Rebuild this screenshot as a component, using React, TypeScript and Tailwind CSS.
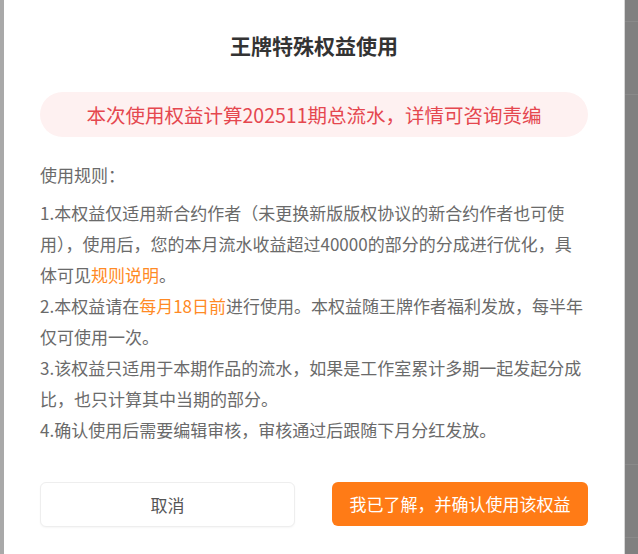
const rules = [
  <>
    1.本权益仅适用新合约作者（未更换新版版权协议的新合约作者也可使用），使用后，您的本月流水收益超过40000的部分的分成进行优化，具体可见
    <span className="text-[#ff8a25]">规则说明</span>。
  </>,
  <>
    2.本权益请在<span className="text-[#ff8a25]">每月18日前</span>
    进行使用。本权益随王牌作者福利发放，每半年仅可使用一次。
  </>,
  <>3.该权益只适用于本期作品的流水，如果是工作室累计多期一起发起分成比，也只计算其中当期的部分。</>,
  <>4.确认使用后需要编辑审核，审核通过后跟随下月分红发放。</>,
];

export default function App() {
  return (
    <div className="flex w-[638px] h-[554px] overflow-hidden font-['Noto_Sans_CJK_SC',sans-serif]">
      {/* overlay edge, left */}
      <div className="w-[4px] bg-[#a9a9a9]" />

      {/* Modal */}
      <div className="w-[621px] bg-white border-r border-[#d6d6d6] px-[36px] pt-[31px]">
        <h2 className="text-center text-[21px] leading-[28px] font-bold text-[#333]">
          王牌特殊权益使用
        </h2>

        <div className="mt-[33px] h-[45px] rounded-full bg-[#fef1f1] flex items-center justify-center">
          <p className="text-[19.5px] text-[#e5474f]">
            本次使用权益计算202511期总流水，详情可咨询责编
          </p>
        </div>

        <p className="mt-[22px] text-[17px] leading-[31px] text-[#6a6a6a]">使用规则：</p>

        <div className="mt-[7px] w-[545px] text-[17px] leading-[31px] text-[#6a6a6a]">
          {rules.map((r, i) => (
            <p key={i}>{r}</p>
          ))}
        </div>

        <div className="mt-[37px] flex justify-between">
          <button className="w-[255px] h-[45px] rounded-[6px] border border-[#eeeeee] bg-white text-[17px] text-[#555] shadow-[0_1px_2px_rgba(0,0,0,0.04)]">
            取消
          </button>
          <button className="w-[256px] h-[44px] rounded-[6px] bg-[#ff7b16] text-[17px] text-white">
            我已了解，并确认使用该权益
          </button>
        </div>
      </div>

      {/* overlay edge, right */}
      <div className="flex-1 bg-[#808080] flex flex-col">
        <div className="h-[22px] border-b border-[#8a8a8a]" />
        <div className="h-[73px] border-b border-[#8a8a8a]" />
        <div className="h-[370px] border-b border-[#8a8a8a]" />
        <div className="h-[73px] border-b border-[#8a8a8a]" />
      </div>
    </div>
  );
}
